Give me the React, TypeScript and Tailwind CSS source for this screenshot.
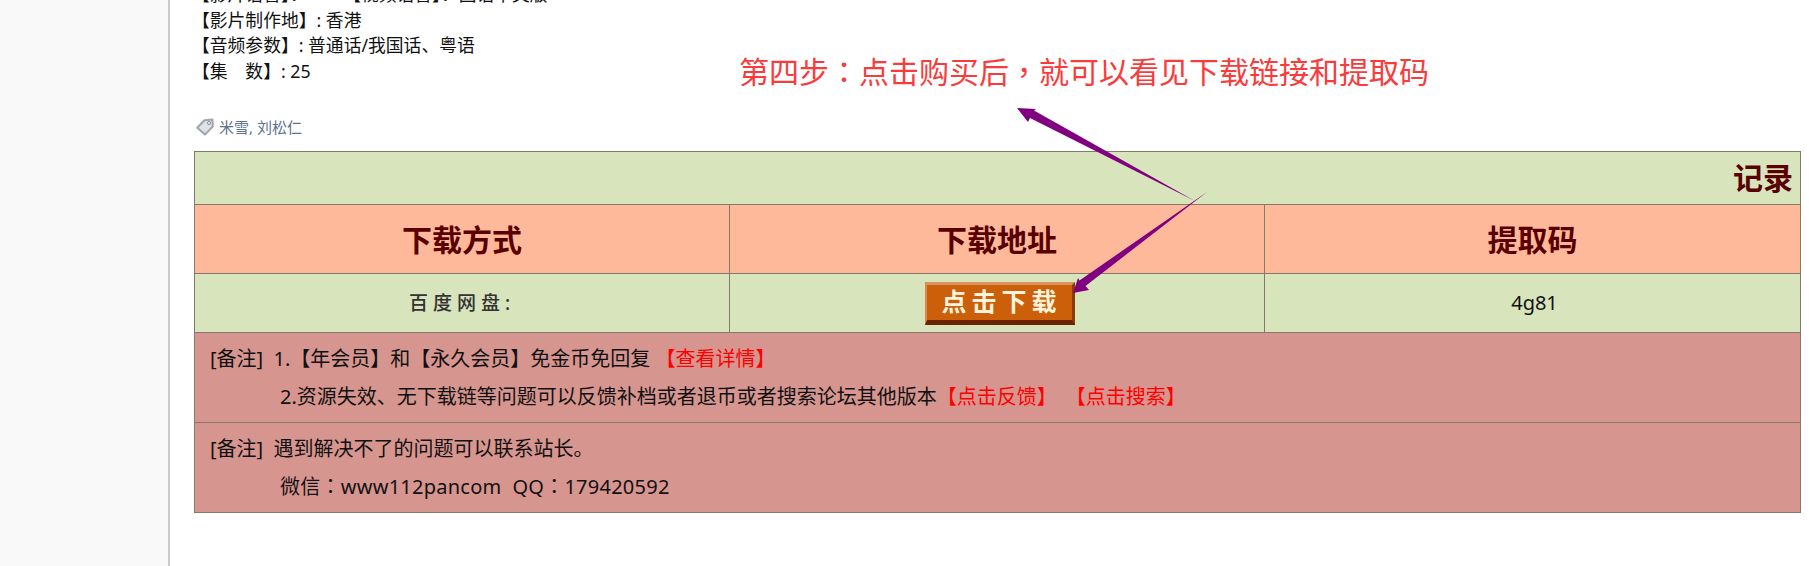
import React from 'react';

const sans = "font-['Noto_Sans','Noto_Sans_CJK_SC',sans-serif]";
const tc = "font-['Noto_Sans','Noto_Sans_CJK_TC',sans-serif]";

const infoLines = [
  '【影片语言】：　　　【视频语言】：国语中文版',
  '【影片制作地】: 香港',
  '【音频参数】: 普通话/我国话、粤语',
  '【集　数】: 25',
];

const NoteRow: React.FC<{ children: React.ReactNode }> = ({ children }) => (
  <tr>
    <td colSpan={3} className="h-[90px] border border-[#85796c] bg-[#d7958f] pl-[15px] align-middle text-[20px] leading-[38px] text-[#111]">
      {children}
    </td>
  </tr>
);

export default function App() {
  return (
    <div className={`relative flex h-[566px] overflow-hidden bg-white ${sans}`}>
      {/* left rail */}
      <div className="w-[170px] shrink-0 border-r-2 border-[#cccccc] bg-[#f9f9f9]" />

      {/* post body */}
      <div className="flex-1 pl-[24px]">
        <div className="-mt-[18px] -ml-[2px] text-[17.8px] leading-[25.5px] text-[#111]">
          {infoLines.map((line) => (
            <div key={line}>{line}</div>
          ))}
        </div>

        <div className="mt-[32px] mb-[13px] flex h-[22px] items-center pl-[2px]">
          <svg width="18" height="18" viewBox="0 0 18 18" className="mr-[5px]">
            <path d="M1.2 9.8 8.5 2.2 16.5 1.5 16.8 8.5 9 16.6Z" fill="#dfe3e7" stroke="#a0a6ac" strokeWidth="2" strokeLinejoin="round" />
            <circle cx="13" cy="5" r="1.5" fill="#fff" stroke="#858b92" />
          </svg>
          <span className="text-[15px] text-[#5b7290]">米雪, 刘松仁</span>
        </div>

        <table className="w-[1607px] table-fixed border-collapse border border-[#333333]">
          <colgroup>
            <col className="w-[535px]" />
            <col className="w-[535px]" />
            <col />
          </colgroup>
          <tbody>
            <tr>
              <td colSpan={3} className="h-[53px] border border-[#85796c] bg-[#d8e4bc] pr-[7px] pb-[2px] text-right text-[30px] font-bold text-[#5a0000]">
                记录
              </td>
            </tr>
            <tr className="text-center text-[30px] font-bold text-[#5a0000]">
              <td className="h-[69px] border border-[#85796c] bg-[#fdb99a]">下载方式</td>
              <td className="border border-[#85796c] bg-[#fdb99a]">下载地址</td>
              <td className="border border-[#85796c] bg-[#fdb99a]">提取码</td>
            </tr>
            <tr className="text-center">
              <td className="h-[59px] border border-[#85796c] bg-[#d8e4bc] text-[19px] font-medium tracking-[5px] text-[#333]">百度网盘:</td>
              <td className="border border-[#85796c] bg-[#d8e4bc] pl-[5px]">
                <a className="mx-auto flex h-[43px] w-[150px] items-center justify-center border-t-[3px] border-r-[3px] border-b-[5px] border-l-[2px] border-t-[#dc9160] border-r-[#8a3c06] border-b-[#6b2400] border-l-[#d98a50] bg-[#cc5f0a] pl-[5px] text-[25px] font-bold tracking-[5px] text-[#fff3dc]">
                  点击下载
                </a>
              </td>
              <td className="border border-[#85796c] bg-[#d8e4bc] pl-[4px] text-[20px] text-[#111]">4g81</td>
            </tr>
            <NoteRow>
              <div>
                [备注]&nbsp;&nbsp;1.【年会员】和【永久会员】免金币免回复 <span className="text-[#ff0000]">【查看详情】</span>
              </div>
              <div className="pl-[70px]">
                2.资源失效、无下载链等问题可以反馈补档或者退币或者搜索论坛其他版本<span className="text-[#ff0000]">【点击反馈】</span>
                <span className="pl-[19px] text-[#ff0000]">【点击搜索】</span>
              </div>
            </NoteRow>
            <NoteRow>
              <div>[备注]&nbsp;&nbsp;遇到解决不了的问题可以联系站长。</div>
              <div className={`pl-[70px] tracking-[0.25px] ${tc}`}>微信：www112pancom&nbsp;&nbsp;QQ：179420592</div>
            </NoteRow>
          </tbody>
        </table>
      </div>

      {/* annotation added over the page */}
      <div className={`absolute top-[50px] left-[739px] text-[30px] leading-[44px] whitespace-nowrap text-[#f93b3b] ${tc}`}>
        第四步：点击购买后，就可以看见下载链接和提取码
      </div>
      <svg className="absolute top-0 left-0 h-[566px] w-[1809px]" viewBox="0 0 1809 566">
        <path d="M1195 201 1034 110.5 1036 109 1017 108 1028 122 1030 118Z" fill="#800080" />
        <path d="M1207 192 1079.5 280.5 1078 278 1073 293 1089 290 1085.5 286Z" fill="#800080" />
      </svg>
    </div>
  );
}
